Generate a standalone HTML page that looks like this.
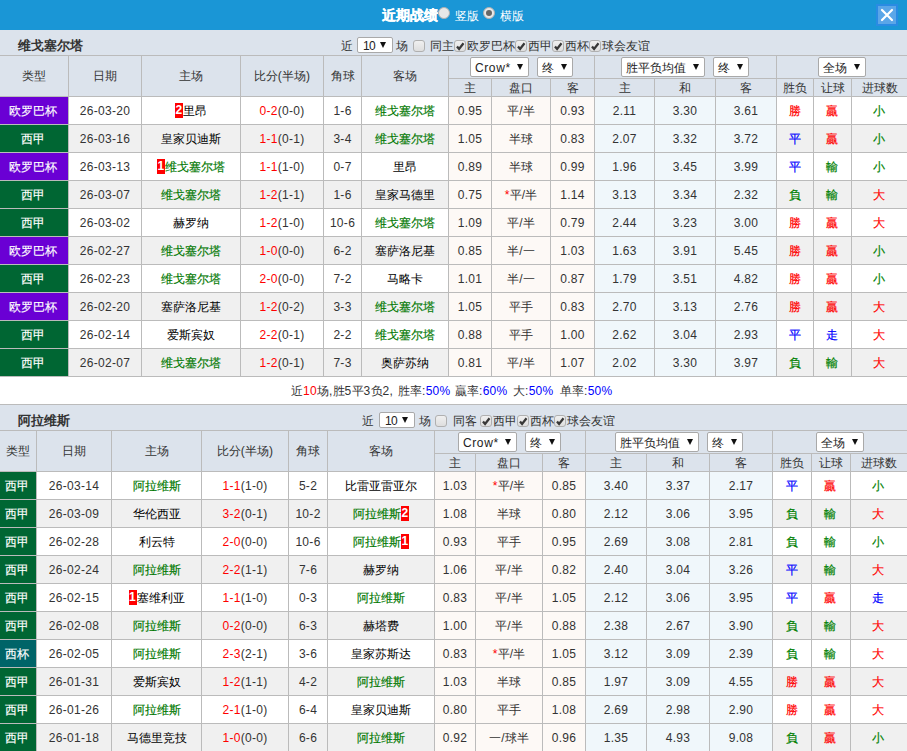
<!DOCTYPE html><html><head><meta charset="utf-8"><style>
html,body{margin:0;padding:0;width:907px;height:751px;overflow:hidden;background:#fff;}
body{font-family:"Liberation Sans",sans-serif;font-size:12px;color:#333;position:relative;}
.a{position:absolute;box-sizing:border-box;}
.t{text-align:center;white-space:nowrap;overflow:visible;letter-spacing:0.3px;}
.c{letter-spacing:0;}
.sel{background:#fff;border:1px solid #a9a9a9;border-radius:2px;padding-left:4px;color:#222;white-space:nowrap;}
.arr{position:absolute;right:5px;top:50%;margin-top:-3px;width:0;height:0;border-left:3px solid transparent;border-right:3px solid transparent;border-top:6px solid #111;}
.cb{width:12px;height:12px;border:1px solid #b0b0b0;border-radius:3px;background:linear-gradient(#f0f0f0,#dedede);}
.cb svg{position:absolute;left:-1px;top:-1px;}
.bd{display:inline-block;position:relative;top:-1px;background:#f00;color:#fff;font-weight:bold;width:8px;height:15px;line-height:15px;text-align:center;vertical-align:middle;}
</style></head><body>

<div class="a" style="left:0px;top:0px;width:907px;height:30px;background:#1a96d6;"></div>
<div class="a t" style="left:382px;top:0px;width:60px;height:30px;line-height:30px;text-align:left;color:#fff;font-weight:bold;font-size:14px;-webkit-text-stroke:0.3px #fff;letter-spacing:0;"><span class="c">近期战绩</span></div>
<div class="a" style="left:438px;top:7px;width:12px;height:12px;border-radius:50%;background:#e8e8e8;border:1px solid #b0b0b0;"></div>
<div class="a t" style="left:455px;top:1px;width:30px;height:30px;line-height:30px;text-align:left;color:#fff;"><span class="c">竖版</span></div>
<div class="a" style="left:483px;top:7px;width:12px;height:12px;border-radius:50%;background:#e8e8e8;border:1px solid #b0b0b0;"><div style="position:absolute;left:2px;top:2px;width:6px;height:6px;border-radius:50%;background:#666"></div></div>
<div class="a t" style="left:500px;top:1px;width:30px;height:30px;line-height:30px;text-align:left;color:#fff;"><span class="c">横版</span></div>
<div class="a" style="left:876px;top:4px;width:22px;height:22px;background:#5ba6e8;border:2px solid #2a8be3;"><svg width="18" height="18" viewBox="0 0 18 18" style="position:absolute;left:0;top:0"><path d="M4 4 L14 14 M14 4 L4 14" stroke="#fff" stroke-width="2.2" stroke-linecap="round"/></svg></div>
<div class="a" style="left:0px;top:30px;width:907px;height:25px;background:#dce3ec;"></div>
<div class="a t" style="left:18px;top:33px;width:200px;height:25px;line-height:25px;text-align:left;font-weight:bold;font-size:13px;color:#333;"><span class="c">维戈塞尔塔</span></div>
<div class="a t" style="left:341px;top:34px;width:14px;height:25px;line-height:25px;text-align:left;"><span class="c">近</span></div>
<div class="a sel" style="left:357px;top:37px;width:36px;height:16px;line-height:14px;font-size:12px;padding-left:5px;line-height:17px;letter-spacing:-0.6px;">10<span class="arr" style="right:6px"></span></div>
<div class="a t" style="left:396px;top:34px;width:14px;height:25px;line-height:25px;text-align:left;"><span class="c">场</span></div>
<div class="a cb" style="left:413px;top:40px;"></div>
<div class="a t" style="left:430px;top:34px;width:26px;height:25px;line-height:25px;text-align:left;"><span class="c">同主</span></div>
<div class="a cb" style="left:454px;top:40px;"><svg width="12" height="12" viewBox="0 0 12 12"><path d="M3 6.4 L5.1 8.9 L9.5 3.3" fill="none" stroke="#383838" stroke-width="2.3"/></svg></div>
<div class="a t" style="left:467px;top:34px;width:50px;height:25px;line-height:25px;text-align:left;"><span class="c">欧罗巴杯</span></div>
<div class="a cb" style="left:515px;top:40px;"><svg width="12" height="12" viewBox="0 0 12 12"><path d="M3 6.4 L5.1 8.9 L9.5 3.3" fill="none" stroke="#383838" stroke-width="2.3"/></svg></div>
<div class="a t" style="left:528px;top:34px;width:26px;height:25px;line-height:25px;text-align:left;"><span class="c">西甲</span></div>
<div class="a cb" style="left:552px;top:40px;"><svg width="12" height="12" viewBox="0 0 12 12"><path d="M3 6.4 L5.1 8.9 L9.5 3.3" fill="none" stroke="#383838" stroke-width="2.3"/></svg></div>
<div class="a t" style="left:565px;top:34px;width:26px;height:25px;line-height:25px;text-align:left;"><span class="c">西杯</span></div>
<div class="a cb" style="left:589px;top:40px;"><svg width="12" height="12" viewBox="0 0 12 12"><path d="M3 6.4 L5.1 8.9 L9.5 3.3" fill="none" stroke="#383838" stroke-width="2.3"/></svg></div>
<div class="a t" style="left:602px;top:34px;width:50px;height:25px;line-height:25px;text-align:left;"><span class="c">球会友谊</span></div>
<div class="a" style="left:0px;top:56px;width:907px;height:40px;background:#dce3ec;"></div>
<div class="a" style="left:0px;top:97px;width:907px;height:27px;background:#fff;"></div>
<div class="a" style="left:449px;top:97px;width:146px;height:27px;background:#fdf9f6;"></div>
<div class="a" style="left:595px;top:97px;width:182px;height:27px;background:#f0f7fb;"></div>
<div class="a" style="left:0px;top:97px;width:68px;height:27px;background:#6a00d4;"></div>
<div class="a" style="left:0px;top:125px;width:907px;height:27px;background:#f0f0f0;"></div>
<div class="a" style="left:449px;top:125px;width:146px;height:27px;background:#fdf9f6;"></div>
<div class="a" style="left:595px;top:125px;width:182px;height:27px;background:#f0f7fb;"></div>
<div class="a" style="left:0px;top:125px;width:68px;height:27px;background:#006633;"></div>
<div class="a" style="left:0px;top:153px;width:907px;height:27px;background:#fff;"></div>
<div class="a" style="left:449px;top:153px;width:146px;height:27px;background:#fdf9f6;"></div>
<div class="a" style="left:595px;top:153px;width:182px;height:27px;background:#f0f7fb;"></div>
<div class="a" style="left:0px;top:153px;width:68px;height:27px;background:#6a00d4;"></div>
<div class="a" style="left:0px;top:181px;width:907px;height:27px;background:#f0f0f0;"></div>
<div class="a" style="left:449px;top:181px;width:146px;height:27px;background:#fdf9f6;"></div>
<div class="a" style="left:595px;top:181px;width:182px;height:27px;background:#f0f7fb;"></div>
<div class="a" style="left:0px;top:181px;width:68px;height:27px;background:#006633;"></div>
<div class="a" style="left:0px;top:209px;width:907px;height:27px;background:#fff;"></div>
<div class="a" style="left:449px;top:209px;width:146px;height:27px;background:#fdf9f6;"></div>
<div class="a" style="left:595px;top:209px;width:182px;height:27px;background:#f0f7fb;"></div>
<div class="a" style="left:0px;top:209px;width:68px;height:27px;background:#006633;"></div>
<div class="a" style="left:0px;top:237px;width:907px;height:27px;background:#f0f0f0;"></div>
<div class="a" style="left:449px;top:237px;width:146px;height:27px;background:#fdf9f6;"></div>
<div class="a" style="left:595px;top:237px;width:182px;height:27px;background:#f0f7fb;"></div>
<div class="a" style="left:0px;top:237px;width:68px;height:27px;background:#6a00d4;"></div>
<div class="a" style="left:0px;top:265px;width:907px;height:27px;background:#fff;"></div>
<div class="a" style="left:449px;top:265px;width:146px;height:27px;background:#fdf9f6;"></div>
<div class="a" style="left:595px;top:265px;width:182px;height:27px;background:#f0f7fb;"></div>
<div class="a" style="left:0px;top:265px;width:68px;height:27px;background:#006633;"></div>
<div class="a" style="left:0px;top:293px;width:907px;height:27px;background:#f0f0f0;"></div>
<div class="a" style="left:449px;top:293px;width:146px;height:27px;background:#fdf9f6;"></div>
<div class="a" style="left:595px;top:293px;width:182px;height:27px;background:#f0f7fb;"></div>
<div class="a" style="left:0px;top:293px;width:68px;height:27px;background:#6a00d4;"></div>
<div class="a" style="left:0px;top:321px;width:907px;height:27px;background:#fff;"></div>
<div class="a" style="left:449px;top:321px;width:146px;height:27px;background:#fdf9f6;"></div>
<div class="a" style="left:595px;top:321px;width:182px;height:27px;background:#f0f7fb;"></div>
<div class="a" style="left:0px;top:321px;width:68px;height:27px;background:#006633;"></div>
<div class="a" style="left:0px;top:349px;width:907px;height:27px;background:#f0f0f0;"></div>
<div class="a" style="left:449px;top:349px;width:146px;height:27px;background:#fdf9f6;"></div>
<div class="a" style="left:595px;top:349px;width:182px;height:27px;background:#f0f7fb;"></div>
<div class="a" style="left:0px;top:349px;width:68px;height:27px;background:#006633;"></div>
<div class="a" style="left:0px;top:55px;width:907px;height:1px;background:#bbbbbb;"></div>
<div class="a" style="left:0px;top:96px;width:907px;height:1px;background:#bbbbbb;"></div>
<div class="a" style="left:0px;top:124px;width:907px;height:1px;background:#bbbbbb;"></div>
<div class="a" style="left:0px;top:152px;width:907px;height:1px;background:#bbbbbb;"></div>
<div class="a" style="left:0px;top:180px;width:907px;height:1px;background:#bbbbbb;"></div>
<div class="a" style="left:0px;top:208px;width:907px;height:1px;background:#bbbbbb;"></div>
<div class="a" style="left:0px;top:236px;width:907px;height:1px;background:#bbbbbb;"></div>
<div class="a" style="left:0px;top:264px;width:907px;height:1px;background:#bbbbbb;"></div>
<div class="a" style="left:0px;top:292px;width:907px;height:1px;background:#bbbbbb;"></div>
<div class="a" style="left:0px;top:320px;width:907px;height:1px;background:#bbbbbb;"></div>
<div class="a" style="left:0px;top:348px;width:907px;height:1px;background:#bbbbbb;"></div>
<div class="a" style="left:0px;top:376px;width:907px;height:1px;background:#bbbbbb;"></div>
<div class="a" style="left:448px;top:78px;width:459px;height:1px;background:#bbbbbb;"></div>
<div class="a" style="left:68px;top:55px;width:1px;height:322px;background:#bbbbbb;"></div>
<div class="a" style="left:141px;top:55px;width:1px;height:322px;background:#bbbbbb;"></div>
<div class="a" style="left:240px;top:55px;width:1px;height:322px;background:#bbbbbb;"></div>
<div class="a" style="left:323px;top:55px;width:1px;height:322px;background:#bbbbbb;"></div>
<div class="a" style="left:361px;top:55px;width:1px;height:322px;background:#bbbbbb;"></div>
<div class="a" style="left:448px;top:55px;width:1px;height:322px;background:#bbbbbb;"></div>
<div class="a" style="left:491px;top:78px;width:1px;height:299px;background:#bbbbbb;"></div>
<div class="a" style="left:550px;top:78px;width:1px;height:299px;background:#bbbbbb;"></div>
<div class="a" style="left:594px;top:55px;width:1px;height:322px;background:#bbbbbb;"></div>
<div class="a" style="left:654px;top:78px;width:1px;height:299px;background:#bbbbbb;"></div>
<div class="a" style="left:715px;top:78px;width:1px;height:299px;background:#bbbbbb;"></div>
<div class="a" style="left:776px;top:55px;width:1px;height:322px;background:#bbbbbb;"></div>
<div class="a" style="left:813px;top:78px;width:1px;height:299px;background:#bbbbbb;"></div>
<div class="a" style="left:851px;top:78px;width:1px;height:299px;background:#bbbbbb;"></div>
<div class="a t" style="left:0px;top:56px;width:68px;height:40px;line-height:40px;color:#333;"><span class="c">类型</span></div>
<div class="a t" style="left:69px;top:56px;width:72px;height:40px;line-height:40px;color:#333;"><span class="c">日期</span></div>
<div class="a t" style="left:142px;top:56px;width:98px;height:40px;line-height:40px;color:#333;"><span class="c">主场</span></div>
<div class="a t" style="left:241px;top:56px;width:82px;height:40px;line-height:40px;color:#333;"><span class="c">比分</span>(<span class="c">半场</span>)</div>
<div class="a t" style="left:324px;top:56px;width:37px;height:40px;line-height:40px;color:#333;"><span class="c">角球</span></div>
<div class="a t" style="left:362px;top:56px;width:86px;height:40px;line-height:40px;color:#333;"><span class="c">客场</span></div>
<div class="a t" style="left:449px;top:80px;width:42px;height:17px;line-height:17px;color:#333;"><span class="c">主</span></div>
<div class="a t" style="left:492px;top:80px;width:58px;height:17px;line-height:17px;color:#333;"><span class="c">盘口</span></div>
<div class="a t" style="left:551px;top:80px;width:43px;height:17px;line-height:17px;color:#333;"><span class="c">客</span></div>
<div class="a t" style="left:595px;top:80px;width:59px;height:17px;line-height:17px;color:#333;"><span class="c">主</span></div>
<div class="a t" style="left:655px;top:80px;width:60px;height:17px;line-height:17px;color:#333;"><span class="c">和</span></div>
<div class="a t" style="left:716px;top:80px;width:60px;height:17px;line-height:17px;color:#333;"><span class="c">客</span></div>
<div class="a t" style="left:777px;top:80px;width:36px;height:17px;line-height:17px;color:#333;"><span class="c">胜负</span></div>
<div class="a t" style="left:814px;top:80px;width:37px;height:17px;line-height:17px;color:#333;"><span class="c">让球</span></div>
<div class="a t" style="left:852px;top:80px;width:55px;height:17px;line-height:17px;color:#333;"><span class="c">进球数</span></div>
<div class="a sel" style="left:470px;top:57px;width:59px;height:20px;line-height:18px;line-height:20px;letter-spacing:0.6px;">Crow*<span class="arr" style="right:5px"></span></div>
<div class="a sel" style="left:537px;top:57px;width:36px;height:20px;line-height:18px;line-height:20px;"><span class="c">终</span><span class="arr" style="right:5px"></span></div>
<div class="a sel" style="left:621px;top:57px;width:84px;height:20px;line-height:18px;line-height:20px;"><span class="c">胜平负均值</span><span class="arr" style="right:5px"></span></div>
<div class="a sel" style="left:713px;top:57px;width:36px;height:20px;line-height:18px;line-height:20px;"><span class="c">终</span><span class="arr" style="right:5px"></span></div>
<div class="a sel" style="left:818px;top:57px;width:48px;height:20px;line-height:18px;line-height:20px;"><span class="c">全场</span><span class="arr" style="right:5px"></span></div>
<div class="a t" style="left:-1px;top:98px;width:68px;height:27px;line-height:27px;color:#fff;-webkit-text-stroke:0.15px #fff;"><span class="c">欧罗巴杯</span></div>
<div class="a t" style="left:69px;top:98px;width:72px;height:27px;line-height:27px;">26-03-20</div>
<div class="a t" style="left:142px;top:98px;width:98px;height:27px;line-height:27px;"><span class="bd">2</span><span style="color:#000"><span class="c">里昂</span></span></div>
<div class="a t" style="left:241px;top:98px;width:82px;height:27px;line-height:27px;"><span style="color:#ff0000">0-2</span>(0-0)</div>
<div class="a t" style="left:324px;top:98px;width:37px;height:27px;line-height:27px;">1-6</div>
<div class="a t" style="left:362px;top:98px;width:86px;height:27px;line-height:27px;"><span style="color:#007800;-webkit-text-stroke:0.15px #007800"><span class="c">维戈塞尔塔</span></span></div>
<div class="a t" style="left:449px;top:98px;width:42px;height:27px;line-height:27px;">0.95</div>
<div class="a t" style="left:492px;top:98px;width:58px;height:27px;line-height:27px;"><span class="c">平</span>/<span class="c">半</span></div>
<div class="a t" style="left:551px;top:98px;width:43px;height:27px;line-height:27px;">0.93</div>
<div class="a t" style="left:595px;top:98px;width:59px;height:27px;line-height:27px;">2.11</div>
<div class="a t" style="left:655px;top:98px;width:60px;height:27px;line-height:27px;">3.30</div>
<div class="a t" style="left:716px;top:98px;width:60px;height:27px;line-height:27px;">3.61</div>
<div class="a t" style="left:777px;top:98px;width:36px;height:27px;line-height:27px;"><span style="color:#ff0000;-webkit-text-stroke:0.2px #ff0000"><span class="c">勝</span></span></div>
<div class="a t" style="left:813px;top:98px;width:37px;height:27px;line-height:27px;"><span style="color:#ff0000;-webkit-text-stroke:0.2px #ff0000"><span class="c">贏</span></span></div>
<div class="a t" style="left:851px;top:98px;width:55px;height:27px;line-height:27px;"><span style="color:#008000;-webkit-text-stroke:0.2px #008000"><span class="c">小</span></span></div>
<div class="a t" style="left:-1px;top:126px;width:68px;height:27px;line-height:27px;color:#fff;-webkit-text-stroke:0.15px #fff;"><span class="c">西甲</span></div>
<div class="a t" style="left:69px;top:126px;width:72px;height:27px;line-height:27px;">26-03-16</div>
<div class="a t" style="left:142px;top:126px;width:98px;height:27px;line-height:27px;"><span style="color:#000"><span class="c">皇家贝迪斯</span></span></div>
<div class="a t" style="left:241px;top:126px;width:82px;height:27px;line-height:27px;"><span style="color:#ff0000">1-1</span>(0-1)</div>
<div class="a t" style="left:324px;top:126px;width:37px;height:27px;line-height:27px;">3-4</div>
<div class="a t" style="left:362px;top:126px;width:86px;height:27px;line-height:27px;"><span style="color:#007800;-webkit-text-stroke:0.15px #007800"><span class="c">维戈塞尔塔</span></span></div>
<div class="a t" style="left:449px;top:126px;width:42px;height:27px;line-height:27px;">1.05</div>
<div class="a t" style="left:492px;top:126px;width:58px;height:27px;line-height:27px;"><span class="c">半球</span></div>
<div class="a t" style="left:551px;top:126px;width:43px;height:27px;line-height:27px;">0.83</div>
<div class="a t" style="left:595px;top:126px;width:59px;height:27px;line-height:27px;">2.07</div>
<div class="a t" style="left:655px;top:126px;width:60px;height:27px;line-height:27px;">3.32</div>
<div class="a t" style="left:716px;top:126px;width:60px;height:27px;line-height:27px;">3.72</div>
<div class="a t" style="left:777px;top:126px;width:36px;height:27px;line-height:27px;"><span style="color:#0000ff;-webkit-text-stroke:0.2px #0000ff"><span class="c">平</span></span></div>
<div class="a t" style="left:813px;top:126px;width:37px;height:27px;line-height:27px;"><span style="color:#ff0000;-webkit-text-stroke:0.2px #ff0000"><span class="c">贏</span></span></div>
<div class="a t" style="left:851px;top:126px;width:55px;height:27px;line-height:27px;"><span style="color:#008000;-webkit-text-stroke:0.2px #008000"><span class="c">小</span></span></div>
<div class="a t" style="left:-1px;top:154px;width:68px;height:27px;line-height:27px;color:#fff;-webkit-text-stroke:0.15px #fff;"><span class="c">欧罗巴杯</span></div>
<div class="a t" style="left:69px;top:154px;width:72px;height:27px;line-height:27px;">26-03-13</div>
<div class="a t" style="left:142px;top:154px;width:98px;height:27px;line-height:27px;"><span class="bd">1</span><span style="color:#007800;-webkit-text-stroke:0.15px #007800"><span class="c">维戈塞尔塔</span></span></div>
<div class="a t" style="left:241px;top:154px;width:82px;height:27px;line-height:27px;"><span style="color:#ff0000">1-1</span>(1-0)</div>
<div class="a t" style="left:324px;top:154px;width:37px;height:27px;line-height:27px;">0-7</div>
<div class="a t" style="left:362px;top:154px;width:86px;height:27px;line-height:27px;"><span style="color:#000"><span class="c">里昂</span></span></div>
<div class="a t" style="left:449px;top:154px;width:42px;height:27px;line-height:27px;">0.89</div>
<div class="a t" style="left:492px;top:154px;width:58px;height:27px;line-height:27px;"><span class="c">半球</span></div>
<div class="a t" style="left:551px;top:154px;width:43px;height:27px;line-height:27px;">0.99</div>
<div class="a t" style="left:595px;top:154px;width:59px;height:27px;line-height:27px;">1.96</div>
<div class="a t" style="left:655px;top:154px;width:60px;height:27px;line-height:27px;">3.45</div>
<div class="a t" style="left:716px;top:154px;width:60px;height:27px;line-height:27px;">3.99</div>
<div class="a t" style="left:777px;top:154px;width:36px;height:27px;line-height:27px;"><span style="color:#0000ff;-webkit-text-stroke:0.2px #0000ff"><span class="c">平</span></span></div>
<div class="a t" style="left:813px;top:154px;width:37px;height:27px;line-height:27px;"><span style="color:#008000;-webkit-text-stroke:0.2px #008000"><span class="c">輸</span></span></div>
<div class="a t" style="left:851px;top:154px;width:55px;height:27px;line-height:27px;"><span style="color:#008000;-webkit-text-stroke:0.2px #008000"><span class="c">小</span></span></div>
<div class="a t" style="left:-1px;top:182px;width:68px;height:27px;line-height:27px;color:#fff;-webkit-text-stroke:0.15px #fff;"><span class="c">西甲</span></div>
<div class="a t" style="left:69px;top:182px;width:72px;height:27px;line-height:27px;">26-03-07</div>
<div class="a t" style="left:142px;top:182px;width:98px;height:27px;line-height:27px;"><span style="color:#007800;-webkit-text-stroke:0.15px #007800"><span class="c">维戈塞尔塔</span></span></div>
<div class="a t" style="left:241px;top:182px;width:82px;height:27px;line-height:27px;"><span style="color:#ff0000">1-2</span>(1-1)</div>
<div class="a t" style="left:324px;top:182px;width:37px;height:27px;line-height:27px;">1-6</div>
<div class="a t" style="left:362px;top:182px;width:86px;height:27px;line-height:27px;"><span style="color:#000"><span class="c">皇家马德里</span></span></div>
<div class="a t" style="left:449px;top:182px;width:42px;height:27px;line-height:27px;">0.75</div>
<div class="a t" style="left:492px;top:182px;width:58px;height:27px;line-height:27px;"><span style="color:#ff0000">*</span><span class="c">平</span>/<span class="c">半</span></div>
<div class="a t" style="left:551px;top:182px;width:43px;height:27px;line-height:27px;">1.14</div>
<div class="a t" style="left:595px;top:182px;width:59px;height:27px;line-height:27px;">3.13</div>
<div class="a t" style="left:655px;top:182px;width:60px;height:27px;line-height:27px;">3.34</div>
<div class="a t" style="left:716px;top:182px;width:60px;height:27px;line-height:27px;">2.32</div>
<div class="a t" style="left:777px;top:182px;width:36px;height:27px;line-height:27px;"><span style="color:#008000;-webkit-text-stroke:0.2px #008000"><span class="c">負</span></span></div>
<div class="a t" style="left:813px;top:182px;width:37px;height:27px;line-height:27px;"><span style="color:#008000;-webkit-text-stroke:0.2px #008000"><span class="c">輸</span></span></div>
<div class="a t" style="left:851px;top:182px;width:55px;height:27px;line-height:27px;"><span style="color:#ff0000;-webkit-text-stroke:0.2px #ff0000"><span class="c">大</span></span></div>
<div class="a t" style="left:-1px;top:210px;width:68px;height:27px;line-height:27px;color:#fff;-webkit-text-stroke:0.15px #fff;"><span class="c">西甲</span></div>
<div class="a t" style="left:69px;top:210px;width:72px;height:27px;line-height:27px;">26-03-02</div>
<div class="a t" style="left:142px;top:210px;width:98px;height:27px;line-height:27px;"><span style="color:#000"><span class="c">赫罗纳</span></span></div>
<div class="a t" style="left:241px;top:210px;width:82px;height:27px;line-height:27px;"><span style="color:#ff0000">1-2</span>(1-0)</div>
<div class="a t" style="left:324px;top:210px;width:37px;height:27px;line-height:27px;">10-6</div>
<div class="a t" style="left:362px;top:210px;width:86px;height:27px;line-height:27px;"><span style="color:#007800;-webkit-text-stroke:0.15px #007800"><span class="c">维戈塞尔塔</span></span></div>
<div class="a t" style="left:449px;top:210px;width:42px;height:27px;line-height:27px;">1.09</div>
<div class="a t" style="left:492px;top:210px;width:58px;height:27px;line-height:27px;"><span class="c">平</span>/<span class="c">半</span></div>
<div class="a t" style="left:551px;top:210px;width:43px;height:27px;line-height:27px;">0.79</div>
<div class="a t" style="left:595px;top:210px;width:59px;height:27px;line-height:27px;">2.44</div>
<div class="a t" style="left:655px;top:210px;width:60px;height:27px;line-height:27px;">3.23</div>
<div class="a t" style="left:716px;top:210px;width:60px;height:27px;line-height:27px;">3.00</div>
<div class="a t" style="left:777px;top:210px;width:36px;height:27px;line-height:27px;"><span style="color:#ff0000;-webkit-text-stroke:0.2px #ff0000"><span class="c">勝</span></span></div>
<div class="a t" style="left:813px;top:210px;width:37px;height:27px;line-height:27px;"><span style="color:#ff0000;-webkit-text-stroke:0.2px #ff0000"><span class="c">贏</span></span></div>
<div class="a t" style="left:851px;top:210px;width:55px;height:27px;line-height:27px;"><span style="color:#ff0000;-webkit-text-stroke:0.2px #ff0000"><span class="c">大</span></span></div>
<div class="a t" style="left:-1px;top:238px;width:68px;height:27px;line-height:27px;color:#fff;-webkit-text-stroke:0.15px #fff;"><span class="c">欧罗巴杯</span></div>
<div class="a t" style="left:69px;top:238px;width:72px;height:27px;line-height:27px;">26-02-27</div>
<div class="a t" style="left:142px;top:238px;width:98px;height:27px;line-height:27px;"><span style="color:#007800;-webkit-text-stroke:0.15px #007800"><span class="c">维戈塞尔塔</span></span></div>
<div class="a t" style="left:241px;top:238px;width:82px;height:27px;line-height:27px;"><span style="color:#ff0000">1-0</span>(0-0)</div>
<div class="a t" style="left:324px;top:238px;width:37px;height:27px;line-height:27px;">6-2</div>
<div class="a t" style="left:362px;top:238px;width:86px;height:27px;line-height:27px;"><span style="color:#000"><span class="c">塞萨洛尼基</span></span></div>
<div class="a t" style="left:449px;top:238px;width:42px;height:27px;line-height:27px;">0.85</div>
<div class="a t" style="left:492px;top:238px;width:58px;height:27px;line-height:27px;"><span class="c">半</span>/<span class="c">一</span></div>
<div class="a t" style="left:551px;top:238px;width:43px;height:27px;line-height:27px;">1.03</div>
<div class="a t" style="left:595px;top:238px;width:59px;height:27px;line-height:27px;">1.63</div>
<div class="a t" style="left:655px;top:238px;width:60px;height:27px;line-height:27px;">3.91</div>
<div class="a t" style="left:716px;top:238px;width:60px;height:27px;line-height:27px;">5.45</div>
<div class="a t" style="left:777px;top:238px;width:36px;height:27px;line-height:27px;"><span style="color:#ff0000;-webkit-text-stroke:0.2px #ff0000"><span class="c">勝</span></span></div>
<div class="a t" style="left:813px;top:238px;width:37px;height:27px;line-height:27px;"><span style="color:#ff0000;-webkit-text-stroke:0.2px #ff0000"><span class="c">贏</span></span></div>
<div class="a t" style="left:851px;top:238px;width:55px;height:27px;line-height:27px;"><span style="color:#008000;-webkit-text-stroke:0.2px #008000"><span class="c">小</span></span></div>
<div class="a t" style="left:-1px;top:266px;width:68px;height:27px;line-height:27px;color:#fff;-webkit-text-stroke:0.15px #fff;"><span class="c">西甲</span></div>
<div class="a t" style="left:69px;top:266px;width:72px;height:27px;line-height:27px;">26-02-23</div>
<div class="a t" style="left:142px;top:266px;width:98px;height:27px;line-height:27px;"><span style="color:#007800;-webkit-text-stroke:0.15px #007800"><span class="c">维戈塞尔塔</span></span></div>
<div class="a t" style="left:241px;top:266px;width:82px;height:27px;line-height:27px;"><span style="color:#ff0000">2-0</span>(0-0)</div>
<div class="a t" style="left:324px;top:266px;width:37px;height:27px;line-height:27px;">7-2</div>
<div class="a t" style="left:362px;top:266px;width:86px;height:27px;line-height:27px;"><span style="color:#000"><span class="c">马略卡</span></span></div>
<div class="a t" style="left:449px;top:266px;width:42px;height:27px;line-height:27px;">1.01</div>
<div class="a t" style="left:492px;top:266px;width:58px;height:27px;line-height:27px;"><span class="c">半</span>/<span class="c">一</span></div>
<div class="a t" style="left:551px;top:266px;width:43px;height:27px;line-height:27px;">0.87</div>
<div class="a t" style="left:595px;top:266px;width:59px;height:27px;line-height:27px;">1.79</div>
<div class="a t" style="left:655px;top:266px;width:60px;height:27px;line-height:27px;">3.51</div>
<div class="a t" style="left:716px;top:266px;width:60px;height:27px;line-height:27px;">4.82</div>
<div class="a t" style="left:777px;top:266px;width:36px;height:27px;line-height:27px;"><span style="color:#ff0000;-webkit-text-stroke:0.2px #ff0000"><span class="c">勝</span></span></div>
<div class="a t" style="left:813px;top:266px;width:37px;height:27px;line-height:27px;"><span style="color:#ff0000;-webkit-text-stroke:0.2px #ff0000"><span class="c">贏</span></span></div>
<div class="a t" style="left:851px;top:266px;width:55px;height:27px;line-height:27px;"><span style="color:#008000;-webkit-text-stroke:0.2px #008000"><span class="c">小</span></span></div>
<div class="a t" style="left:-1px;top:294px;width:68px;height:27px;line-height:27px;color:#fff;-webkit-text-stroke:0.15px #fff;"><span class="c">欧罗巴杯</span></div>
<div class="a t" style="left:69px;top:294px;width:72px;height:27px;line-height:27px;">26-02-20</div>
<div class="a t" style="left:142px;top:294px;width:98px;height:27px;line-height:27px;"><span style="color:#000"><span class="c">塞萨洛尼基</span></span></div>
<div class="a t" style="left:241px;top:294px;width:82px;height:27px;line-height:27px;"><span style="color:#ff0000">1-2</span>(0-2)</div>
<div class="a t" style="left:324px;top:294px;width:37px;height:27px;line-height:27px;">3-3</div>
<div class="a t" style="left:362px;top:294px;width:86px;height:27px;line-height:27px;"><span style="color:#007800;-webkit-text-stroke:0.15px #007800"><span class="c">维戈塞尔塔</span></span></div>
<div class="a t" style="left:449px;top:294px;width:42px;height:27px;line-height:27px;">1.05</div>
<div class="a t" style="left:492px;top:294px;width:58px;height:27px;line-height:27px;"><span class="c">平手</span></div>
<div class="a t" style="left:551px;top:294px;width:43px;height:27px;line-height:27px;">0.83</div>
<div class="a t" style="left:595px;top:294px;width:59px;height:27px;line-height:27px;">2.70</div>
<div class="a t" style="left:655px;top:294px;width:60px;height:27px;line-height:27px;">3.13</div>
<div class="a t" style="left:716px;top:294px;width:60px;height:27px;line-height:27px;">2.76</div>
<div class="a t" style="left:777px;top:294px;width:36px;height:27px;line-height:27px;"><span style="color:#ff0000;-webkit-text-stroke:0.2px #ff0000"><span class="c">勝</span></span></div>
<div class="a t" style="left:813px;top:294px;width:37px;height:27px;line-height:27px;"><span style="color:#ff0000;-webkit-text-stroke:0.2px #ff0000"><span class="c">贏</span></span></div>
<div class="a t" style="left:851px;top:294px;width:55px;height:27px;line-height:27px;"><span style="color:#ff0000;-webkit-text-stroke:0.2px #ff0000"><span class="c">大</span></span></div>
<div class="a t" style="left:-1px;top:322px;width:68px;height:27px;line-height:27px;color:#fff;-webkit-text-stroke:0.15px #fff;"><span class="c">西甲</span></div>
<div class="a t" style="left:69px;top:322px;width:72px;height:27px;line-height:27px;">26-02-14</div>
<div class="a t" style="left:142px;top:322px;width:98px;height:27px;line-height:27px;"><span style="color:#000"><span class="c">爱斯宾奴</span></span></div>
<div class="a t" style="left:241px;top:322px;width:82px;height:27px;line-height:27px;"><span style="color:#ff0000">2-2</span>(0-1)</div>
<div class="a t" style="left:324px;top:322px;width:37px;height:27px;line-height:27px;">2-2</div>
<div class="a t" style="left:362px;top:322px;width:86px;height:27px;line-height:27px;"><span style="color:#007800;-webkit-text-stroke:0.15px #007800"><span class="c">维戈塞尔塔</span></span></div>
<div class="a t" style="left:449px;top:322px;width:42px;height:27px;line-height:27px;">0.88</div>
<div class="a t" style="left:492px;top:322px;width:58px;height:27px;line-height:27px;"><span class="c">平手</span></div>
<div class="a t" style="left:551px;top:322px;width:43px;height:27px;line-height:27px;">1.00</div>
<div class="a t" style="left:595px;top:322px;width:59px;height:27px;line-height:27px;">2.62</div>
<div class="a t" style="left:655px;top:322px;width:60px;height:27px;line-height:27px;">3.04</div>
<div class="a t" style="left:716px;top:322px;width:60px;height:27px;line-height:27px;">2.93</div>
<div class="a t" style="left:777px;top:322px;width:36px;height:27px;line-height:27px;"><span style="color:#0000ff;-webkit-text-stroke:0.2px #0000ff"><span class="c">平</span></span></div>
<div class="a t" style="left:813px;top:322px;width:37px;height:27px;line-height:27px;"><span style="color:#0000ff;-webkit-text-stroke:0.2px #0000ff"><span class="c">走</span></span></div>
<div class="a t" style="left:851px;top:322px;width:55px;height:27px;line-height:27px;"><span style="color:#ff0000;-webkit-text-stroke:0.2px #ff0000"><span class="c">大</span></span></div>
<div class="a t" style="left:-1px;top:350px;width:68px;height:27px;line-height:27px;color:#fff;-webkit-text-stroke:0.15px #fff;"><span class="c">西甲</span></div>
<div class="a t" style="left:69px;top:350px;width:72px;height:27px;line-height:27px;">26-02-07</div>
<div class="a t" style="left:142px;top:350px;width:98px;height:27px;line-height:27px;"><span style="color:#007800;-webkit-text-stroke:0.15px #007800"><span class="c">维戈塞尔塔</span></span></div>
<div class="a t" style="left:241px;top:350px;width:82px;height:27px;line-height:27px;"><span style="color:#ff0000">1-2</span>(0-1)</div>
<div class="a t" style="left:324px;top:350px;width:37px;height:27px;line-height:27px;">7-3</div>
<div class="a t" style="left:362px;top:350px;width:86px;height:27px;line-height:27px;"><span style="color:#000"><span class="c">奥萨苏纳</span></span></div>
<div class="a t" style="left:449px;top:350px;width:42px;height:27px;line-height:27px;">0.81</div>
<div class="a t" style="left:492px;top:350px;width:58px;height:27px;line-height:27px;"><span class="c">平</span>/<span class="c">半</span></div>
<div class="a t" style="left:551px;top:350px;width:43px;height:27px;line-height:27px;">1.07</div>
<div class="a t" style="left:595px;top:350px;width:59px;height:27px;line-height:27px;">2.02</div>
<div class="a t" style="left:655px;top:350px;width:60px;height:27px;line-height:27px;">3.30</div>
<div class="a t" style="left:716px;top:350px;width:60px;height:27px;line-height:27px;">3.97</div>
<div class="a t" style="left:777px;top:350px;width:36px;height:27px;line-height:27px;"><span style="color:#008000;-webkit-text-stroke:0.2px #008000"><span class="c">負</span></span></div>
<div class="a t" style="left:813px;top:350px;width:37px;height:27px;line-height:27px;"><span style="color:#008000;-webkit-text-stroke:0.2px #008000"><span class="c">輸</span></span></div>
<div class="a t" style="left:851px;top:350px;width:55px;height:27px;line-height:27px;"><span style="color:#ff0000;-webkit-text-stroke:0.2px #ff0000"><span class="c">大</span></span></div>
<div class="a" style="left:0px;top:377px;width:907px;height:27px;background:#fff;"></div>
<div class="a t" style="left:291px;top:378px;width:120px;height:27px;line-height:27px;text-align:left;"><span class="c">近</span><span style="color:#f00">10</span><span class="c">场</span>,<span class="c">胜</span>5<span class="c">平</span>3<span class="c">负</span>2,</div>
<div class="a t" style="left:398px;top:378px;width:60px;height:27px;line-height:27px;text-align:left;"><span class="c">胜率</span>:<span style="color:#00f">50%</span></div>
<div class="a t" style="left:455px;top:378px;width:60px;height:27px;line-height:27px;text-align:left;"><span class="c">贏率</span>:<span style="color:#00f">60%</span></div>
<div class="a t" style="left:513px;top:378px;width:60px;height:27px;line-height:27px;text-align:left;"><span class="c">大</span>:<span style="color:#00f">50%</span></div>
<div class="a t" style="left:560px;top:378px;width:60px;height:27px;line-height:27px;text-align:left;"><span class="c">单率</span>:<span style="color:#00f">50%</span></div>
<div class="a" style="left:0px;top:404px;width:907px;height:1px;background:#bbbbbb;"></div>
<div class="a" style="left:0px;top:405px;width:907px;height:25px;background:#dce3ec;"></div>
<div class="a t" style="left:18px;top:408px;width:200px;height:25px;line-height:25px;text-align:left;font-weight:bold;font-size:13px;color:#333;"><span class="c">阿拉维斯</span></div>
<div class="a t" style="left:362px;top:409px;width:14px;height:25px;line-height:25px;text-align:left;"><span class="c">近</span></div>
<div class="a sel" style="left:379px;top:412px;width:36px;height:16px;line-height:14px;font-size:12px;padding-left:5px;line-height:17px;letter-spacing:-0.6px;">10<span class="arr" style="right:6px"></span></div>
<div class="a t" style="left:419px;top:409px;width:14px;height:25px;line-height:25px;text-align:left;"><span class="c">场</span></div>
<div class="a cb" style="left:435px;top:415px;"></div>
<div class="a t" style="left:453px;top:409px;width:26px;height:25px;line-height:25px;text-align:left;"><span class="c">同客</span></div>
<div class="a cb" style="left:480px;top:415px;"><svg width="12" height="12" viewBox="0 0 12 12"><path d="M3 6.4 L5.1 8.9 L9.5 3.3" fill="none" stroke="#383838" stroke-width="2.3"/></svg></div>
<div class="a t" style="left:493px;top:409px;width:26px;height:25px;line-height:25px;text-align:left;"><span class="c">西甲</span></div>
<div class="a cb" style="left:517px;top:415px;"><svg width="12" height="12" viewBox="0 0 12 12"><path d="M3 6.4 L5.1 8.9 L9.5 3.3" fill="none" stroke="#383838" stroke-width="2.3"/></svg></div>
<div class="a t" style="left:530px;top:409px;width:26px;height:25px;line-height:25px;text-align:left;"><span class="c">西杯</span></div>
<div class="a cb" style="left:554px;top:415px;"><svg width="12" height="12" viewBox="0 0 12 12"><path d="M3 6.4 L5.1 8.9 L9.5 3.3" fill="none" stroke="#383838" stroke-width="2.3"/></svg></div>
<div class="a t" style="left:567px;top:409px;width:50px;height:25px;line-height:25px;text-align:left;"><span class="c">球会友谊</span></div>
<div class="a" style="left:0px;top:431px;width:907px;height:40px;background:#dce3ec;"></div>
<div class="a" style="left:0px;top:472px;width:907px;height:27px;background:#fff;"></div>
<div class="a" style="left:435px;top:472px;width:151px;height:27px;background:#fdf9f6;"></div>
<div class="a" style="left:586px;top:472px;width:187px;height:27px;background:#f0f7fb;"></div>
<div class="a" style="left:0px;top:472px;width:36px;height:27px;background:#006633;"></div>
<div class="a" style="left:0px;top:500px;width:907px;height:27px;background:#f0f0f0;"></div>
<div class="a" style="left:435px;top:500px;width:151px;height:27px;background:#fdf9f6;"></div>
<div class="a" style="left:586px;top:500px;width:187px;height:27px;background:#f0f7fb;"></div>
<div class="a" style="left:0px;top:500px;width:36px;height:27px;background:#006633;"></div>
<div class="a" style="left:0px;top:528px;width:907px;height:27px;background:#fff;"></div>
<div class="a" style="left:435px;top:528px;width:151px;height:27px;background:#fdf9f6;"></div>
<div class="a" style="left:586px;top:528px;width:187px;height:27px;background:#f0f7fb;"></div>
<div class="a" style="left:0px;top:528px;width:36px;height:27px;background:#006633;"></div>
<div class="a" style="left:0px;top:556px;width:907px;height:27px;background:#f0f0f0;"></div>
<div class="a" style="left:435px;top:556px;width:151px;height:27px;background:#fdf9f6;"></div>
<div class="a" style="left:586px;top:556px;width:187px;height:27px;background:#f0f7fb;"></div>
<div class="a" style="left:0px;top:556px;width:36px;height:27px;background:#006633;"></div>
<div class="a" style="left:0px;top:584px;width:907px;height:27px;background:#fff;"></div>
<div class="a" style="left:435px;top:584px;width:151px;height:27px;background:#fdf9f6;"></div>
<div class="a" style="left:586px;top:584px;width:187px;height:27px;background:#f0f7fb;"></div>
<div class="a" style="left:0px;top:584px;width:36px;height:27px;background:#006633;"></div>
<div class="a" style="left:0px;top:612px;width:907px;height:27px;background:#f0f0f0;"></div>
<div class="a" style="left:435px;top:612px;width:151px;height:27px;background:#fdf9f6;"></div>
<div class="a" style="left:586px;top:612px;width:187px;height:27px;background:#f0f7fb;"></div>
<div class="a" style="left:0px;top:612px;width:36px;height:27px;background:#006633;"></div>
<div class="a" style="left:0px;top:640px;width:907px;height:27px;background:#fff;"></div>
<div class="a" style="left:435px;top:640px;width:151px;height:27px;background:#fdf9f6;"></div>
<div class="a" style="left:586px;top:640px;width:187px;height:27px;background:#f0f7fb;"></div>
<div class="a" style="left:0px;top:640px;width:36px;height:27px;background:#006468;"></div>
<div class="a" style="left:0px;top:668px;width:907px;height:27px;background:#f0f0f0;"></div>
<div class="a" style="left:435px;top:668px;width:151px;height:27px;background:#fdf9f6;"></div>
<div class="a" style="left:586px;top:668px;width:187px;height:27px;background:#f0f7fb;"></div>
<div class="a" style="left:0px;top:668px;width:36px;height:27px;background:#006633;"></div>
<div class="a" style="left:0px;top:696px;width:907px;height:27px;background:#fff;"></div>
<div class="a" style="left:435px;top:696px;width:151px;height:27px;background:#fdf9f6;"></div>
<div class="a" style="left:586px;top:696px;width:187px;height:27px;background:#f0f7fb;"></div>
<div class="a" style="left:0px;top:696px;width:36px;height:27px;background:#006633;"></div>
<div class="a" style="left:0px;top:724px;width:907px;height:27px;background:#f0f0f0;"></div>
<div class="a" style="left:435px;top:724px;width:151px;height:27px;background:#fdf9f6;"></div>
<div class="a" style="left:586px;top:724px;width:187px;height:27px;background:#f0f7fb;"></div>
<div class="a" style="left:0px;top:724px;width:36px;height:27px;background:#006633;"></div>
<div class="a" style="left:0px;top:430px;width:907px;height:1px;background:#bbbbbb;"></div>
<div class="a" style="left:0px;top:471px;width:907px;height:1px;background:#bbbbbb;"></div>
<div class="a" style="left:0px;top:499px;width:907px;height:1px;background:#bbbbbb;"></div>
<div class="a" style="left:0px;top:527px;width:907px;height:1px;background:#bbbbbb;"></div>
<div class="a" style="left:0px;top:555px;width:907px;height:1px;background:#bbbbbb;"></div>
<div class="a" style="left:0px;top:583px;width:907px;height:1px;background:#bbbbbb;"></div>
<div class="a" style="left:0px;top:611px;width:907px;height:1px;background:#bbbbbb;"></div>
<div class="a" style="left:0px;top:639px;width:907px;height:1px;background:#bbbbbb;"></div>
<div class="a" style="left:0px;top:667px;width:907px;height:1px;background:#bbbbbb;"></div>
<div class="a" style="left:0px;top:695px;width:907px;height:1px;background:#bbbbbb;"></div>
<div class="a" style="left:0px;top:723px;width:907px;height:1px;background:#bbbbbb;"></div>
<div class="a" style="left:434px;top:453px;width:473px;height:1px;background:#bbbbbb;"></div>
<div class="a" style="left:36px;top:430px;width:1px;height:321px;background:#bbbbbb;"></div>
<div class="a" style="left:111px;top:430px;width:1px;height:321px;background:#bbbbbb;"></div>
<div class="a" style="left:201px;top:430px;width:1px;height:321px;background:#bbbbbb;"></div>
<div class="a" style="left:288px;top:430px;width:1px;height:321px;background:#bbbbbb;"></div>
<div class="a" style="left:327px;top:430px;width:1px;height:321px;background:#bbbbbb;"></div>
<div class="a" style="left:434px;top:430px;width:1px;height:321px;background:#bbbbbb;"></div>
<div class="a" style="left:475px;top:453px;width:1px;height:298px;background:#bbbbbb;"></div>
<div class="a" style="left:542px;top:453px;width:1px;height:298px;background:#bbbbbb;"></div>
<div class="a" style="left:585px;top:430px;width:1px;height:321px;background:#bbbbbb;"></div>
<div class="a" style="left:646px;top:453px;width:1px;height:298px;background:#bbbbbb;"></div>
<div class="a" style="left:709px;top:453px;width:1px;height:298px;background:#bbbbbb;"></div>
<div class="a" style="left:772px;top:430px;width:1px;height:321px;background:#bbbbbb;"></div>
<div class="a" style="left:811px;top:453px;width:1px;height:298px;background:#bbbbbb;"></div>
<div class="a" style="left:850px;top:453px;width:1px;height:298px;background:#bbbbbb;"></div>
<div class="a t" style="left:0px;top:431px;width:36px;height:40px;line-height:40px;color:#333;"><span class="c">类型</span></div>
<div class="a t" style="left:37px;top:431px;width:74px;height:40px;line-height:40px;color:#333;"><span class="c">日期</span></div>
<div class="a t" style="left:112px;top:431px;width:89px;height:40px;line-height:40px;color:#333;"><span class="c">主场</span></div>
<div class="a t" style="left:202px;top:431px;width:86px;height:40px;line-height:40px;color:#333;"><span class="c">比分</span>(<span class="c">半场</span>)</div>
<div class="a t" style="left:289px;top:431px;width:38px;height:40px;line-height:40px;color:#333;"><span class="c">角球</span></div>
<div class="a t" style="left:328px;top:431px;width:106px;height:40px;line-height:40px;color:#333;"><span class="c">客场</span></div>
<div class="a t" style="left:435px;top:455px;width:40px;height:17px;line-height:17px;color:#333;"><span class="c">主</span></div>
<div class="a t" style="left:476px;top:455px;width:66px;height:17px;line-height:17px;color:#333;"><span class="c">盘口</span></div>
<div class="a t" style="left:543px;top:455px;width:42px;height:17px;line-height:17px;color:#333;"><span class="c">客</span></div>
<div class="a t" style="left:586px;top:455px;width:60px;height:17px;line-height:17px;color:#333;"><span class="c">主</span></div>
<div class="a t" style="left:647px;top:455px;width:62px;height:17px;line-height:17px;color:#333;"><span class="c">和</span></div>
<div class="a t" style="left:710px;top:455px;width:62px;height:17px;line-height:17px;color:#333;"><span class="c">客</span></div>
<div class="a t" style="left:773px;top:455px;width:38px;height:17px;line-height:17px;color:#333;"><span class="c">胜负</span></div>
<div class="a t" style="left:812px;top:455px;width:38px;height:17px;line-height:17px;color:#333;"><span class="c">让球</span></div>
<div class="a t" style="left:851px;top:455px;width:56px;height:17px;line-height:17px;color:#333;"><span class="c">进球数</span></div>
<div class="a sel" style="left:458px;top:432px;width:59px;height:20px;line-height:18px;line-height:20px;letter-spacing:0.6px;">Crow*<span class="arr" style="right:5px"></span></div>
<div class="a sel" style="left:525px;top:432px;width:36px;height:20px;line-height:18px;line-height:20px;"><span class="c">终</span><span class="arr" style="right:5px"></span></div>
<div class="a sel" style="left:615px;top:432px;width:84px;height:20px;line-height:18px;line-height:20px;"><span class="c">胜平负均值</span><span class="arr" style="right:5px"></span></div>
<div class="a sel" style="left:707px;top:432px;width:36px;height:20px;line-height:18px;line-height:20px;"><span class="c">终</span><span class="arr" style="right:5px"></span></div>
<div class="a sel" style="left:816px;top:432px;width:48px;height:20px;line-height:18px;line-height:20px;"><span class="c">全场</span><span class="arr" style="right:5px"></span></div>
<div class="a t" style="left:-1px;top:473px;width:36px;height:27px;line-height:27px;color:#fff;-webkit-text-stroke:0.15px #fff;"><span class="c">西甲</span></div>
<div class="a t" style="left:37px;top:473px;width:74px;height:27px;line-height:27px;">26-03-14</div>
<div class="a t" style="left:112px;top:473px;width:89px;height:27px;line-height:27px;"><span style="color:#007800;-webkit-text-stroke:0.15px #007800"><span class="c">阿拉维斯</span></span></div>
<div class="a t" style="left:202px;top:473px;width:86px;height:27px;line-height:27px;"><span style="color:#ff0000">1-1</span>(1-0)</div>
<div class="a t" style="left:289px;top:473px;width:38px;height:27px;line-height:27px;">5-2</div>
<div class="a t" style="left:328px;top:473px;width:106px;height:27px;line-height:27px;"><span style="color:#000"><span class="c">比雷亚雷亚尔</span></span></div>
<div class="a t" style="left:435px;top:473px;width:40px;height:27px;line-height:27px;">1.03</div>
<div class="a t" style="left:476px;top:473px;width:66px;height:27px;line-height:27px;"><span style="color:#ff0000">*</span><span class="c">平</span>/<span class="c">半</span></div>
<div class="a t" style="left:543px;top:473px;width:42px;height:27px;line-height:27px;">0.85</div>
<div class="a t" style="left:586px;top:473px;width:60px;height:27px;line-height:27px;">3.40</div>
<div class="a t" style="left:647px;top:473px;width:62px;height:27px;line-height:27px;">3.37</div>
<div class="a t" style="left:710px;top:473px;width:62px;height:27px;line-height:27px;">2.17</div>
<div class="a t" style="left:773px;top:473px;width:38px;height:27px;line-height:27px;"><span style="color:#0000ff;-webkit-text-stroke:0.2px #0000ff"><span class="c">平</span></span></div>
<div class="a t" style="left:811px;top:473px;width:38px;height:27px;line-height:27px;"><span style="color:#ff0000;-webkit-text-stroke:0.2px #ff0000"><span class="c">贏</span></span></div>
<div class="a t" style="left:850px;top:473px;width:56px;height:27px;line-height:27px;"><span style="color:#008000;-webkit-text-stroke:0.2px #008000"><span class="c">小</span></span></div>
<div class="a t" style="left:-1px;top:501px;width:36px;height:27px;line-height:27px;color:#fff;-webkit-text-stroke:0.15px #fff;"><span class="c">西甲</span></div>
<div class="a t" style="left:37px;top:501px;width:74px;height:27px;line-height:27px;">26-03-09</div>
<div class="a t" style="left:112px;top:501px;width:89px;height:27px;line-height:27px;"><span style="color:#000"><span class="c">华伦西亚</span></span></div>
<div class="a t" style="left:202px;top:501px;width:86px;height:27px;line-height:27px;"><span style="color:#ff0000">3-2</span>(0-1)</div>
<div class="a t" style="left:289px;top:501px;width:38px;height:27px;line-height:27px;">10-2</div>
<div class="a t" style="left:328px;top:501px;width:106px;height:27px;line-height:27px;"><span style="color:#007800;-webkit-text-stroke:0.15px #007800"><span class="c">阿拉维斯</span></span><span class="bd">2</span></div>
<div class="a t" style="left:435px;top:501px;width:40px;height:27px;line-height:27px;">1.08</div>
<div class="a t" style="left:476px;top:501px;width:66px;height:27px;line-height:27px;"><span class="c">半球</span></div>
<div class="a t" style="left:543px;top:501px;width:42px;height:27px;line-height:27px;">0.80</div>
<div class="a t" style="left:586px;top:501px;width:60px;height:27px;line-height:27px;">2.12</div>
<div class="a t" style="left:647px;top:501px;width:62px;height:27px;line-height:27px;">3.06</div>
<div class="a t" style="left:710px;top:501px;width:62px;height:27px;line-height:27px;">3.95</div>
<div class="a t" style="left:773px;top:501px;width:38px;height:27px;line-height:27px;"><span style="color:#008000;-webkit-text-stroke:0.2px #008000"><span class="c">負</span></span></div>
<div class="a t" style="left:811px;top:501px;width:38px;height:27px;line-height:27px;"><span style="color:#008000;-webkit-text-stroke:0.2px #008000"><span class="c">輸</span></span></div>
<div class="a t" style="left:850px;top:501px;width:56px;height:27px;line-height:27px;"><span style="color:#ff0000;-webkit-text-stroke:0.2px #ff0000"><span class="c">大</span></span></div>
<div class="a t" style="left:-1px;top:529px;width:36px;height:27px;line-height:27px;color:#fff;-webkit-text-stroke:0.15px #fff;"><span class="c">西甲</span></div>
<div class="a t" style="left:37px;top:529px;width:74px;height:27px;line-height:27px;">26-02-28</div>
<div class="a t" style="left:112px;top:529px;width:89px;height:27px;line-height:27px;"><span style="color:#000"><span class="c">利云特</span></span></div>
<div class="a t" style="left:202px;top:529px;width:86px;height:27px;line-height:27px;"><span style="color:#ff0000">2-0</span>(0-0)</div>
<div class="a t" style="left:289px;top:529px;width:38px;height:27px;line-height:27px;">10-6</div>
<div class="a t" style="left:328px;top:529px;width:106px;height:27px;line-height:27px;"><span style="color:#007800;-webkit-text-stroke:0.15px #007800"><span class="c">阿拉维斯</span></span><span class="bd">1</span></div>
<div class="a t" style="left:435px;top:529px;width:40px;height:27px;line-height:27px;">0.93</div>
<div class="a t" style="left:476px;top:529px;width:66px;height:27px;line-height:27px;"><span class="c">平手</span></div>
<div class="a t" style="left:543px;top:529px;width:42px;height:27px;line-height:27px;">0.95</div>
<div class="a t" style="left:586px;top:529px;width:60px;height:27px;line-height:27px;">2.69</div>
<div class="a t" style="left:647px;top:529px;width:62px;height:27px;line-height:27px;">3.08</div>
<div class="a t" style="left:710px;top:529px;width:62px;height:27px;line-height:27px;">2.81</div>
<div class="a t" style="left:773px;top:529px;width:38px;height:27px;line-height:27px;"><span style="color:#008000;-webkit-text-stroke:0.2px #008000"><span class="c">負</span></span></div>
<div class="a t" style="left:811px;top:529px;width:38px;height:27px;line-height:27px;"><span style="color:#008000;-webkit-text-stroke:0.2px #008000"><span class="c">輸</span></span></div>
<div class="a t" style="left:850px;top:529px;width:56px;height:27px;line-height:27px;"><span style="color:#008000;-webkit-text-stroke:0.2px #008000"><span class="c">小</span></span></div>
<div class="a t" style="left:-1px;top:557px;width:36px;height:27px;line-height:27px;color:#fff;-webkit-text-stroke:0.15px #fff;"><span class="c">西甲</span></div>
<div class="a t" style="left:37px;top:557px;width:74px;height:27px;line-height:27px;">26-02-24</div>
<div class="a t" style="left:112px;top:557px;width:89px;height:27px;line-height:27px;"><span style="color:#007800;-webkit-text-stroke:0.15px #007800"><span class="c">阿拉维斯</span></span></div>
<div class="a t" style="left:202px;top:557px;width:86px;height:27px;line-height:27px;"><span style="color:#ff0000">2-2</span>(1-1)</div>
<div class="a t" style="left:289px;top:557px;width:38px;height:27px;line-height:27px;">7-6</div>
<div class="a t" style="left:328px;top:557px;width:106px;height:27px;line-height:27px;"><span style="color:#000"><span class="c">赫罗纳</span></span></div>
<div class="a t" style="left:435px;top:557px;width:40px;height:27px;line-height:27px;">1.06</div>
<div class="a t" style="left:476px;top:557px;width:66px;height:27px;line-height:27px;"><span class="c">平</span>/<span class="c">半</span></div>
<div class="a t" style="left:543px;top:557px;width:42px;height:27px;line-height:27px;">0.82</div>
<div class="a t" style="left:586px;top:557px;width:60px;height:27px;line-height:27px;">2.40</div>
<div class="a t" style="left:647px;top:557px;width:62px;height:27px;line-height:27px;">3.04</div>
<div class="a t" style="left:710px;top:557px;width:62px;height:27px;line-height:27px;">3.26</div>
<div class="a t" style="left:773px;top:557px;width:38px;height:27px;line-height:27px;"><span style="color:#0000ff;-webkit-text-stroke:0.2px #0000ff"><span class="c">平</span></span></div>
<div class="a t" style="left:811px;top:557px;width:38px;height:27px;line-height:27px;"><span style="color:#008000;-webkit-text-stroke:0.2px #008000"><span class="c">輸</span></span></div>
<div class="a t" style="left:850px;top:557px;width:56px;height:27px;line-height:27px;"><span style="color:#ff0000;-webkit-text-stroke:0.2px #ff0000"><span class="c">大</span></span></div>
<div class="a t" style="left:-1px;top:585px;width:36px;height:27px;line-height:27px;color:#fff;-webkit-text-stroke:0.15px #fff;"><span class="c">西甲</span></div>
<div class="a t" style="left:37px;top:585px;width:74px;height:27px;line-height:27px;">26-02-15</div>
<div class="a t" style="left:112px;top:585px;width:89px;height:27px;line-height:27px;"><span class="bd">1</span><span style="color:#000"><span class="c">塞维利亚</span></span></div>
<div class="a t" style="left:202px;top:585px;width:86px;height:27px;line-height:27px;"><span style="color:#ff0000">1-1</span>(1-0)</div>
<div class="a t" style="left:289px;top:585px;width:38px;height:27px;line-height:27px;">0-3</div>
<div class="a t" style="left:328px;top:585px;width:106px;height:27px;line-height:27px;"><span style="color:#007800;-webkit-text-stroke:0.15px #007800"><span class="c">阿拉维斯</span></span></div>
<div class="a t" style="left:435px;top:585px;width:40px;height:27px;line-height:27px;">0.83</div>
<div class="a t" style="left:476px;top:585px;width:66px;height:27px;line-height:27px;"><span class="c">平</span>/<span class="c">半</span></div>
<div class="a t" style="left:543px;top:585px;width:42px;height:27px;line-height:27px;">1.05</div>
<div class="a t" style="left:586px;top:585px;width:60px;height:27px;line-height:27px;">2.12</div>
<div class="a t" style="left:647px;top:585px;width:62px;height:27px;line-height:27px;">3.06</div>
<div class="a t" style="left:710px;top:585px;width:62px;height:27px;line-height:27px;">3.95</div>
<div class="a t" style="left:773px;top:585px;width:38px;height:27px;line-height:27px;"><span style="color:#0000ff;-webkit-text-stroke:0.2px #0000ff"><span class="c">平</span></span></div>
<div class="a t" style="left:811px;top:585px;width:38px;height:27px;line-height:27px;"><span style="color:#ff0000;-webkit-text-stroke:0.2px #ff0000"><span class="c">贏</span></span></div>
<div class="a t" style="left:850px;top:585px;width:56px;height:27px;line-height:27px;"><span style="color:#0000ff;-webkit-text-stroke:0.2px #0000ff"><span class="c">走</span></span></div>
<div class="a t" style="left:-1px;top:613px;width:36px;height:27px;line-height:27px;color:#fff;-webkit-text-stroke:0.15px #fff;"><span class="c">西甲</span></div>
<div class="a t" style="left:37px;top:613px;width:74px;height:27px;line-height:27px;">26-02-08</div>
<div class="a t" style="left:112px;top:613px;width:89px;height:27px;line-height:27px;"><span style="color:#007800;-webkit-text-stroke:0.15px #007800"><span class="c">阿拉维斯</span></span></div>
<div class="a t" style="left:202px;top:613px;width:86px;height:27px;line-height:27px;"><span style="color:#ff0000">0-2</span>(0-0)</div>
<div class="a t" style="left:289px;top:613px;width:38px;height:27px;line-height:27px;">6-3</div>
<div class="a t" style="left:328px;top:613px;width:106px;height:27px;line-height:27px;"><span style="color:#000"><span class="c">赫塔费</span></span></div>
<div class="a t" style="left:435px;top:613px;width:40px;height:27px;line-height:27px;">1.00</div>
<div class="a t" style="left:476px;top:613px;width:66px;height:27px;line-height:27px;"><span class="c">平</span>/<span class="c">半</span></div>
<div class="a t" style="left:543px;top:613px;width:42px;height:27px;line-height:27px;">0.88</div>
<div class="a t" style="left:586px;top:613px;width:60px;height:27px;line-height:27px;">2.38</div>
<div class="a t" style="left:647px;top:613px;width:62px;height:27px;line-height:27px;">2.67</div>
<div class="a t" style="left:710px;top:613px;width:62px;height:27px;line-height:27px;">3.90</div>
<div class="a t" style="left:773px;top:613px;width:38px;height:27px;line-height:27px;"><span style="color:#008000;-webkit-text-stroke:0.2px #008000"><span class="c">負</span></span></div>
<div class="a t" style="left:811px;top:613px;width:38px;height:27px;line-height:27px;"><span style="color:#008000;-webkit-text-stroke:0.2px #008000"><span class="c">輸</span></span></div>
<div class="a t" style="left:850px;top:613px;width:56px;height:27px;line-height:27px;"><span style="color:#ff0000;-webkit-text-stroke:0.2px #ff0000"><span class="c">大</span></span></div>
<div class="a t" style="left:-1px;top:641px;width:36px;height:27px;line-height:27px;color:#fff;-webkit-text-stroke:0.15px #fff;"><span class="c">西杯</span></div>
<div class="a t" style="left:37px;top:641px;width:74px;height:27px;line-height:27px;">26-02-05</div>
<div class="a t" style="left:112px;top:641px;width:89px;height:27px;line-height:27px;"><span style="color:#007800;-webkit-text-stroke:0.15px #007800"><span class="c">阿拉维斯</span></span></div>
<div class="a t" style="left:202px;top:641px;width:86px;height:27px;line-height:27px;"><span style="color:#ff0000">2-3</span>(2-1)</div>
<div class="a t" style="left:289px;top:641px;width:38px;height:27px;line-height:27px;">3-6</div>
<div class="a t" style="left:328px;top:641px;width:106px;height:27px;line-height:27px;"><span style="color:#000"><span class="c">皇家苏斯达</span></span></div>
<div class="a t" style="left:435px;top:641px;width:40px;height:27px;line-height:27px;">0.83</div>
<div class="a t" style="left:476px;top:641px;width:66px;height:27px;line-height:27px;"><span style="color:#ff0000">*</span><span class="c">平</span>/<span class="c">半</span></div>
<div class="a t" style="left:543px;top:641px;width:42px;height:27px;line-height:27px;">1.05</div>
<div class="a t" style="left:586px;top:641px;width:60px;height:27px;line-height:27px;">3.12</div>
<div class="a t" style="left:647px;top:641px;width:62px;height:27px;line-height:27px;">3.09</div>
<div class="a t" style="left:710px;top:641px;width:62px;height:27px;line-height:27px;">2.39</div>
<div class="a t" style="left:773px;top:641px;width:38px;height:27px;line-height:27px;"><span style="color:#008000;-webkit-text-stroke:0.2px #008000"><span class="c">負</span></span></div>
<div class="a t" style="left:811px;top:641px;width:38px;height:27px;line-height:27px;"><span style="color:#008000;-webkit-text-stroke:0.2px #008000"><span class="c">輸</span></span></div>
<div class="a t" style="left:850px;top:641px;width:56px;height:27px;line-height:27px;"><span style="color:#ff0000;-webkit-text-stroke:0.2px #ff0000"><span class="c">大</span></span></div>
<div class="a t" style="left:-1px;top:669px;width:36px;height:27px;line-height:27px;color:#fff;-webkit-text-stroke:0.15px #fff;"><span class="c">西甲</span></div>
<div class="a t" style="left:37px;top:669px;width:74px;height:27px;line-height:27px;">26-01-31</div>
<div class="a t" style="left:112px;top:669px;width:89px;height:27px;line-height:27px;"><span style="color:#000"><span class="c">爱斯宾奴</span></span></div>
<div class="a t" style="left:202px;top:669px;width:86px;height:27px;line-height:27px;"><span style="color:#ff0000">1-2</span>(1-1)</div>
<div class="a t" style="left:289px;top:669px;width:38px;height:27px;line-height:27px;">4-2</div>
<div class="a t" style="left:328px;top:669px;width:106px;height:27px;line-height:27px;"><span style="color:#007800;-webkit-text-stroke:0.15px #007800"><span class="c">阿拉维斯</span></span></div>
<div class="a t" style="left:435px;top:669px;width:40px;height:27px;line-height:27px;">1.03</div>
<div class="a t" style="left:476px;top:669px;width:66px;height:27px;line-height:27px;"><span class="c">半球</span></div>
<div class="a t" style="left:543px;top:669px;width:42px;height:27px;line-height:27px;">0.85</div>
<div class="a t" style="left:586px;top:669px;width:60px;height:27px;line-height:27px;">1.97</div>
<div class="a t" style="left:647px;top:669px;width:62px;height:27px;line-height:27px;">3.09</div>
<div class="a t" style="left:710px;top:669px;width:62px;height:27px;line-height:27px;">4.55</div>
<div class="a t" style="left:773px;top:669px;width:38px;height:27px;line-height:27px;"><span style="color:#ff0000;-webkit-text-stroke:0.2px #ff0000"><span class="c">勝</span></span></div>
<div class="a t" style="left:811px;top:669px;width:38px;height:27px;line-height:27px;"><span style="color:#ff0000;-webkit-text-stroke:0.2px #ff0000"><span class="c">贏</span></span></div>
<div class="a t" style="left:850px;top:669px;width:56px;height:27px;line-height:27px;"><span style="color:#ff0000;-webkit-text-stroke:0.2px #ff0000"><span class="c">大</span></span></div>
<div class="a t" style="left:-1px;top:697px;width:36px;height:27px;line-height:27px;color:#fff;-webkit-text-stroke:0.15px #fff;"><span class="c">西甲</span></div>
<div class="a t" style="left:37px;top:697px;width:74px;height:27px;line-height:27px;">26-01-26</div>
<div class="a t" style="left:112px;top:697px;width:89px;height:27px;line-height:27px;"><span style="color:#007800;-webkit-text-stroke:0.15px #007800"><span class="c">阿拉维斯</span></span></div>
<div class="a t" style="left:202px;top:697px;width:86px;height:27px;line-height:27px;"><span style="color:#ff0000">2-1</span>(1-0)</div>
<div class="a t" style="left:289px;top:697px;width:38px;height:27px;line-height:27px;">6-4</div>
<div class="a t" style="left:328px;top:697px;width:106px;height:27px;line-height:27px;"><span style="color:#000"><span class="c">皇家贝迪斯</span></span></div>
<div class="a t" style="left:435px;top:697px;width:40px;height:27px;line-height:27px;">0.80</div>
<div class="a t" style="left:476px;top:697px;width:66px;height:27px;line-height:27px;"><span class="c">平手</span></div>
<div class="a t" style="left:543px;top:697px;width:42px;height:27px;line-height:27px;">1.08</div>
<div class="a t" style="left:586px;top:697px;width:60px;height:27px;line-height:27px;">2.69</div>
<div class="a t" style="left:647px;top:697px;width:62px;height:27px;line-height:27px;">2.98</div>
<div class="a t" style="left:710px;top:697px;width:62px;height:27px;line-height:27px;">2.90</div>
<div class="a t" style="left:773px;top:697px;width:38px;height:27px;line-height:27px;"><span style="color:#ff0000;-webkit-text-stroke:0.2px #ff0000"><span class="c">勝</span></span></div>
<div class="a t" style="left:811px;top:697px;width:38px;height:27px;line-height:27px;"><span style="color:#ff0000;-webkit-text-stroke:0.2px #ff0000"><span class="c">贏</span></span></div>
<div class="a t" style="left:850px;top:697px;width:56px;height:27px;line-height:27px;"><span style="color:#ff0000;-webkit-text-stroke:0.2px #ff0000"><span class="c">大</span></span></div>
<div class="a t" style="left:-1px;top:725px;width:36px;height:27px;line-height:27px;color:#fff;-webkit-text-stroke:0.15px #fff;"><span class="c">西甲</span></div>
<div class="a t" style="left:37px;top:725px;width:74px;height:27px;line-height:27px;">26-01-18</div>
<div class="a t" style="left:112px;top:725px;width:89px;height:27px;line-height:27px;"><span style="color:#000"><span class="c">马德里竞技</span></span></div>
<div class="a t" style="left:202px;top:725px;width:86px;height:27px;line-height:27px;"><span style="color:#ff0000">1-0</span>(0-0)</div>
<div class="a t" style="left:289px;top:725px;width:38px;height:27px;line-height:27px;">6-6</div>
<div class="a t" style="left:328px;top:725px;width:106px;height:27px;line-height:27px;"><span style="color:#007800;-webkit-text-stroke:0.15px #007800"><span class="c">阿拉维斯</span></span></div>
<div class="a t" style="left:435px;top:725px;width:40px;height:27px;line-height:27px;">0.92</div>
<div class="a t" style="left:476px;top:725px;width:66px;height:27px;line-height:27px;"><span class="c">一</span>/<span class="c">球半</span></div>
<div class="a t" style="left:543px;top:725px;width:42px;height:27px;line-height:27px;">0.96</div>
<div class="a t" style="left:586px;top:725px;width:60px;height:27px;line-height:27px;">1.35</div>
<div class="a t" style="left:647px;top:725px;width:62px;height:27px;line-height:27px;">4.93</div>
<div class="a t" style="left:710px;top:725px;width:62px;height:27px;line-height:27px;">9.08</div>
<div class="a t" style="left:773px;top:725px;width:38px;height:27px;line-height:27px;"><span style="color:#008000;-webkit-text-stroke:0.2px #008000"><span class="c">負</span></span></div>
<div class="a t" style="left:811px;top:725px;width:38px;height:27px;line-height:27px;"><span style="color:#ff0000;-webkit-text-stroke:0.2px #ff0000"><span class="c">贏</span></span></div>
<div class="a t" style="left:850px;top:725px;width:56px;height:27px;line-height:27px;"><span style="color:#008000;-webkit-text-stroke:0.2px #008000"><span class="c">小</span></span></div>
</body></html>
